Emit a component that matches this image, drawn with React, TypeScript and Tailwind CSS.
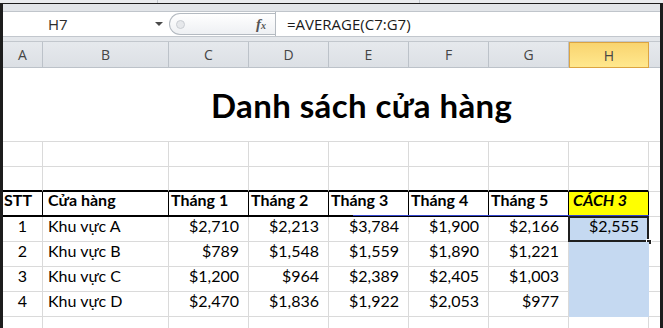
import { ReactNode } from 'react';

const cols = ['A', 'B', 'C', 'D', 'E', 'F', 'G', 'H'];

const rows = [
  { stt: '1', name: 'Khu vực A', values: ['$2,710', '$2,213', '$3,784', '$1,900', '$2,166'], avg: '$2,555' },
  { stt: '2', name: 'Khu vực B', values: ['$789', '$1,548', '$1,559', '$1,890', '$1,221'], avg: '' },
  { stt: '3', name: 'Khu vực C', values: ['$1,200', '$964', '$2,389', '$2,405', '$1,003'], avg: '' },
  { stt: '4', name: 'Khu vực D', values: ['$2,470', '$1,836', '$1,922', '$2,053', '$977'], avg: '' },
];

const gridCols = 'grid grid-cols-[40px_126px_80px_80px_80px_80px_80px_80px_11px]';

function Cell({ className = '', children }: { className?: string; children?: ReactNode }) {
  return <div className={`flex h-[25px] items-end pb-[3px] ${className}`}>{children}</div>;
}

function EmptyRow({ bottomBlack = false }: { bottomBlack?: boolean }) {
  return (
    <div className={gridCols}>
      {cols.map((c) => (
        <div
          key={c}
          className={`h-[25px] border-r border-[#dadada] ${bottomBlack ? 'border-b-2 border-b-black' : 'border-b'}`}
        />
      ))}
      <div className="h-[25px] border-b border-[#dadada]" />
    </div>
  );
}

export default function App() {
  return (
    <div className="flex h-[328px] w-[663px] flex-col overflow-hidden bg-[#1d1d1d] font-['Lato',sans-serif] text-[16px] text-black">
      <div className="flex h-[3px] shrink-0 bg-[#e9ebee]">
        <div className="ml-[157px] h-full w-px bg-[#c3c8ce]" />
        <div className="ml-[261px] h-full w-px bg-[#c3c8ce]" />
      </div>

      <div className="flex flex-1 px-[3px] pt-[1px]">
        <div className="flex w-[657px] flex-col bg-white">
          {/* toolbar edge */}
          <div className="h-[8px] shrink-0 border-b border-[#c0c5cb] bg-[#e2e5e9]" />

          {/* formula bar */}
          <div className="flex h-[24px] shrink-0 items-center bg-white">
            <div className="flex h-full w-[166px] items-center pl-[45px] font-['Open_Sans',sans-serif] text-[15px] text-[#2d2d2d]">
              <span>H7</span>
              <span className="ml-auto mr-[6px] h-0 w-0 border-x-[4px] border-t-[4px] border-x-transparent border-t-[#4a4a4a]" />
            </div>
            <div className="flex h-[22px] w-[106px] items-center rounded-l-full border border-r-0 border-[#b4bac1] bg-gradient-to-b from-white to-[#eef0f3] pl-[6px]">
              <span className="h-[9px] w-[9px] rounded-full border border-[#c9cdd2] bg-[#e6e8eb]" />
              <span className="ml-auto mr-[9px] font-['Liberation_Serif',serif] text-[15px] font-bold italic leading-none text-[#555]">
                f<span className="text-[10px]">x</span>
              </span>
            </div>
            <div className="flex h-full flex-1 items-center border-l border-[#b4bac1] pl-[11px] font-['Open_Sans',sans-serif] text-[15px] text-[#1a1a1a]">
              =AVERAGE(C7:G7)
            </div>
          </div>

          <div className="h-[6px] shrink-0 border-y border-[#c2c7cd] bg-[#e4e7eb]" />

          {/* column headers */}
          <div className={`${gridCols} h-[26px] shrink-0 font-['Open_Sans',sans-serif] text-[14px] text-[#454545]`}>
            {cols.map((c) =>
              c === 'H' ? (
                <div
                  key={c}
                  className="flex items-center justify-center border border-[#dca441] bg-gradient-to-b from-[#f9d46f] to-[#ffe88e]"
                >
                  {c}
                </div>
              ) : (
                <div
                  key={c}
                  className="flex items-center justify-center border-r border-b border-[#bcc2c9] bg-gradient-to-b from-[#e6e9ed] to-[#dce0e5]"
                >
                  {c}
                </div>
              ),
            )}
            <div className="border-b border-[#bcc2c9] bg-gradient-to-b from-[#e6e9ed] to-[#dce0e5]" />
          </div>

          {/* title */}
          <div className="flex h-[74px] shrink-0 items-center border-b border-[#dadada] pl-[208px] pt-[3px]">
            <span className="text-[33px] font-bold tracking-[0.4px]">Danh sách cửa hàng</span>
          </div>

          <EmptyRow />
          <EmptyRow bottomBlack />

          {/* header row */}
          <div className={`${gridCols} relative font-bold`}>
            <Cell className="border-r border-b-2 border-black pl-[1px]">STT</Cell>
            <Cell className="border-r border-b-2 border-black pl-[5px]">Cửa hàng</Cell>
            {['Tháng 1', 'Tháng 2', 'Tháng 3', 'Tháng 4', 'Tháng 5'].map((t) => (
              <Cell key={t} className="border-r border-b-2 border-black pl-[2px]">
                {t}
              </Cell>
            ))}
            <Cell className="border-r border-b-2 border-black bg-[#ffff00] pl-[4px] italic">CÁCH 3</Cell>
            <Cell className="border-b border-[#dadada]" />
            <div className="absolute bottom-[1px] left-[350px] h-px w-[296px] bg-[#3344cc]" />
          </div>

          {/* data */}
          {rows.map((r, i) => (
            <div key={r.stt} className={gridCols}>
              <Cell className="justify-center border-r border-b border-[#dadada]">{r.stt}</Cell>
              <Cell className="border-r border-b border-[#dadada] pl-[5px]">{r.name}</Cell>
              {r.values.map((v, j) => (
                <Cell key={j} className="justify-end border-r border-b border-[#dadada] pr-[9px]">
                  {v}
                </Cell>
              ))}
              <Cell className="relative justify-end border-r border-b border-[#c5d9f1] bg-[#c5d9f1] pr-[9px]">
                {r.avg}
                {i === 0 && (
                  <>
                    <div className="absolute -top-px -left-px -right-px -bottom-px border-2 border-[#1f1f1f]" />
                    <div className="absolute -right-[4px] -bottom-[4px] h-[6px] w-[6px] border border-white bg-[#1f1f1f]" />
                  </>
                )}
              </Cell>
              <Cell className="border-b border-[#dadada]" />
            </div>
          ))}

          <EmptyRow />
        </div>
      </div>
    </div>
  );
}
